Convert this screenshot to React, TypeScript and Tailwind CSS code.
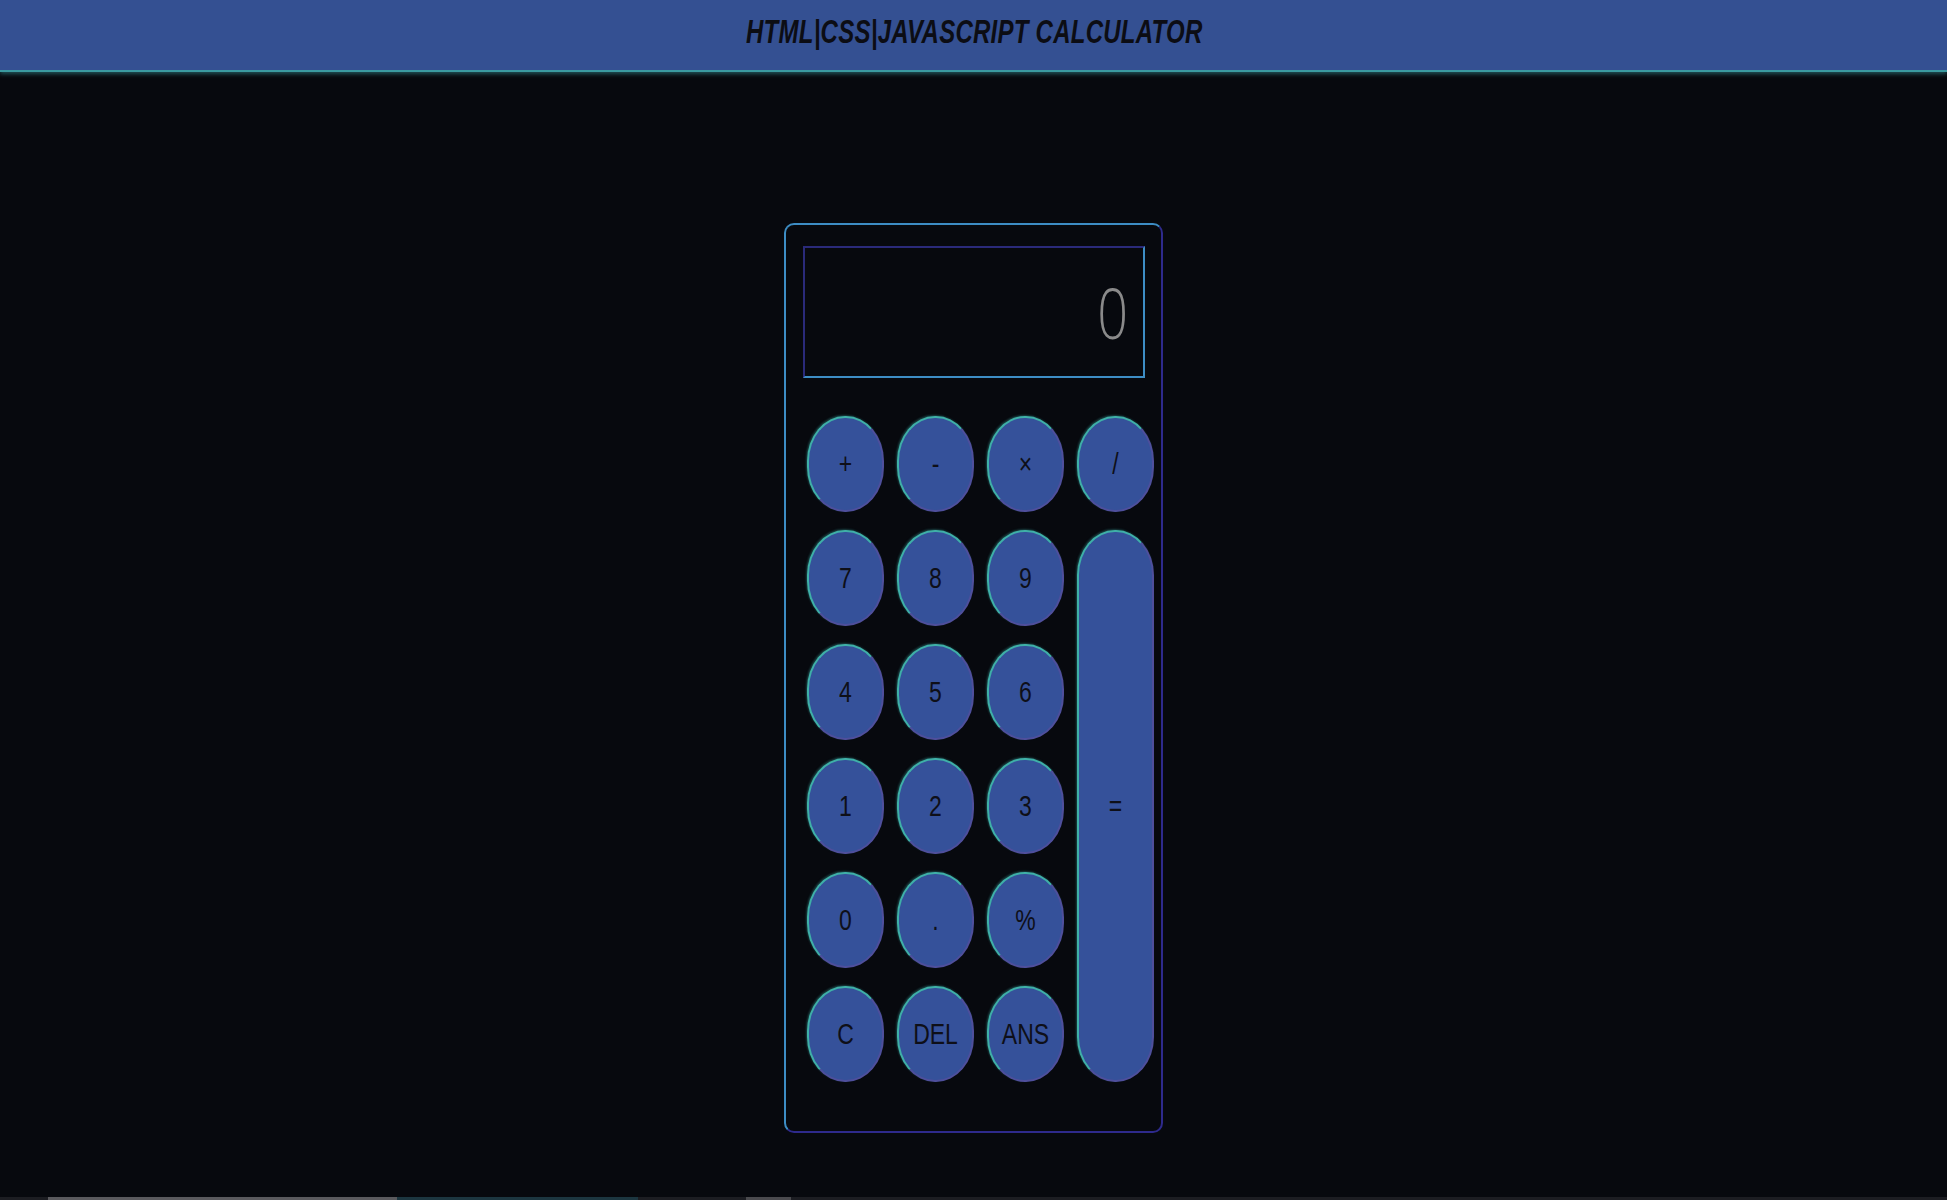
const keys = [
  ['+', '-', '×', '/'],
  ['7', '8', '9'],
  ['4', '5', '6'],
  ['1', '2', '3'],
  ['0', '.', '%'],
  ['C', 'DEL', 'ANS'],
]

function Key({ label, className = '' }: { label: string; className?: string }) {
  return (
    <button
      className={`flex items-center justify-center rounded-[38px_/_45px] border-2 border-t-[#3fb0a8] border-l-[#3fb0a8] border-r-[#4f4f9c] border-b-[#4f4f9c] bg-[#35519a] text-[23px] text-[#0e0f18] shadow-[-1px_-1px_2px_rgba(63,176,168,0.35)] ${className}`}
    >
      <span className="inline-block scale-y-[1.3]">{label}</span>
    </button>
  )
}

export default function App() {
  return (
    <div
      className="flex min-h-[1200px] flex-col bg-[#07090e]"
      style={{ fontFamily: '"Liberation Sans", Arial, sans-serif' }}
    >
      <header className="flex h-[72px] items-center border-b-2 border-[#3a9aa0] bg-[#345092] pb-[6px] pl-[746px] shadow-[0_2px_4px_rgba(58,154,160,0.5)]">
        <h1 className="inline-block scale-y-[1.4] text-[24px] font-bold italic tracking-[0.25px] text-[#0c0d14]">
          HTML|CSS|JAVASCRIPT CALCULATOR
        </h1>
      </header>

      <main className="mx-auto mt-[151px] w-[379px] rounded-[10px] border-2 border-t-[#3d8dc4] border-l-[#3d8dc4] border-r-[#2e2a8c] border-b-[#2e2a8c] pb-[49px]">
        <div className="ml-[17px] mt-[21px] flex h-[132px] w-[342px] items-center justify-end border-2 border-t-[#2a2a7a] border-l-[#2a2a7a] border-r-[#3d8dc4] border-b-[#3d8dc4] pr-[15px]">
          <span
            className="inline-block scale-y-[1.3] text-[54px] font-light text-[#8a8a8a]"
            style={{ fontFamily: '"Open Sans", sans-serif' }}
          >
            0
          </span>
        </div>

        <div className="ml-[21px] mt-[38px] grid w-[347px] grid-cols-[repeat(4,77px)] grid-rows-[repeat(6,96px)] gap-x-[13px] gap-y-[18px]">
          {keys[0].map((k) => (
            <Key key={k} label={k} />
          ))}
          {keys.slice(1).flatMap((row) =>
            row.map((k) => <Key key={k} label={k} />),
          )}
          <Key label="=" className="col-start-4 row-span-5 row-start-2" />
        </div>
      </main>

      <div className="mt-auto flex h-[3px] bg-[#1c1d22]">
        <div className="ml-[48px] w-[349px] bg-[#5a5a5e]" />
        <div className="w-[241px] bg-[#1c3640]" />
        <div className="ml-[108px] w-[45px] bg-[#4a4a4e]" />
      </div>
    </div>
  )
}
